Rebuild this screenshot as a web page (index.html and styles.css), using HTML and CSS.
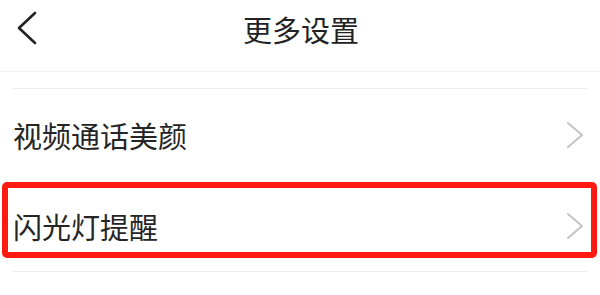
FILE: index.html
```html
<!DOCTYPE html>
<html lang="zh-CN">
<head>
<meta charset="utf-8">
<title>更多设置</title>
<link rel="stylesheet" href="styles.css">
</head>
<body>
<div class="page">
  <header class="topbar">
    <span class="back">
      <svg width="24" height="36" viewBox="0 0 24 36"><polyline points="19,2 3,17 19,32" fill="none" stroke="#222" stroke-width="2.6" stroke-linecap="round" stroke-linejoin="round"/></svg>
    </span>
    <h1 class="title">更多设置</h1>
  </header>
  <div class="list">
    <div class="row">
      <span class="label">视频通话美颜</span>
      <svg class="arrow" width="19" height="28" viewBox="0 0 19 28"><polyline points="2,2 16,14 2,26" fill="none" stroke="#c4c4c4" stroke-width="2" stroke-linecap="round" stroke-linejoin="round"/></svg>
    </div>
    <div class="row">
      <span class="label">闪光灯提醒</span>
      <svg class="arrow" width="19" height="28" viewBox="0 0 19 28"><polyline points="2,2 16,14 2,26" fill="none" stroke="#c4c4c4" stroke-width="2" stroke-linecap="round" stroke-linejoin="round"/></svg>
    </div>
  </div>
  <div class="highlight"></div>
</div>
</body>
</html>
```
FILE: styles.css
```css
html, body {
  margin: 0;
  padding: 0;
  background: #ffffff;
}
body {
  font-family: "Noto Sans CJK SC", "Noto Sans", sans-serif;
  color: #222222;
}
.page {
  position: relative;
  width: 600px;
  height: 295px;
  overflow: hidden;
}
.topbar {
  position: relative;
  height: 71px;
  border-bottom: 1px solid #f1f1f1;
  display: flex;
  justify-content: center;
  box-sizing: content-box;
}
.back {
  position: absolute;
  left: 16px;
  top: 11px;
  display: block;
  line-height: 0;
}
.title {
  margin: 15px 0 0 0;
  font-size: 29px;
  line-height: 29px;
  font-weight: 400;
  color: #222;
  padding-left: 2px;
}
.list {
  margin: 16px 13px 0 13px;
  border-top: 1px solid #efefef;
  border-bottom: 1px solid #efefef;
}
.row {
  height: 91px;
  display: flex;
  align-items: center;
  justify-content: space-between;
  padding-right: 2px;
}
.label {
  font-size: 29px;
  line-height: 34px;
  color: #252525;
}
.arrow {
  display: block;
}
.highlight {
  position: absolute;
  left: 2px;
  top: 182px;
  width: 583px;
  height: 64px;
  border: 6px solid #ff1a12;
  border-radius: 5px;
}
```
